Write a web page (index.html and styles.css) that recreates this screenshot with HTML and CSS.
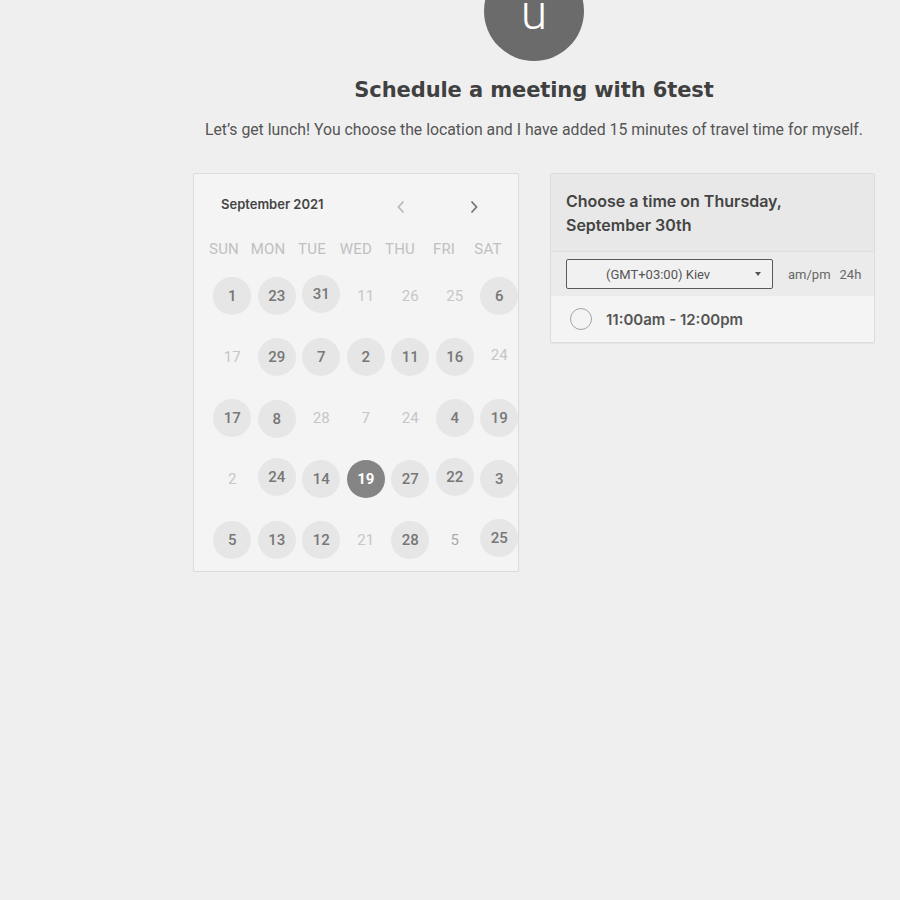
FILE: index.html
```html
<!DOCTYPE html>
<html>
<head>
<meta charset="utf-8">
<link rel="stylesheet" href="styles.css">
</head>
<body>
<main class="page">
  <div class="avatar"><span>u</span></div>
  <h1 class="title">Schedule a meeting with 6test</h1>
  <p class="subtitle">Let’s get lunch! You choose the location and I have added 15 minutes of travel time for myself.</p>
  <div class="cards">
    <section class="calendar">
      <div class="cal-head">
        <span class="month">September 2021</span>
        <span class="nav prev"><svg width="10" height="14" viewBox="0 0 10 14"><path d="M7.5 1.5 L2.5 7 L7.5 12.5" fill="none" stroke="currentColor" stroke-width="1.8"/></svg></span>
        <span class="nav next"><svg width="10" height="14" viewBox="0 0 10 14"><path d="M2.5 1.5 L7.5 7 L2.5 12.5" fill="none" stroke="currentColor" stroke-width="1.8"/></svg></span>
      </div>
      <div class="weekdays">
        <span>SUN</span><span>MON</span><span>TUE</span><span>WED</span><span>THU</span><span>FRI</span><span>SAT</span>
      </div>
      <div class="dates">
        <div class="cell"><span class="day on">1</span></div>
        <div class="cell"><span class="day on">23</span></div>
        <div class="cell"><span class="day on up">31</span></div>
        <div class="cell"><span class="day">11</span></div>
        <div class="cell"><span class="day">26</span></div>
        <div class="cell"><span class="day">25</span></div>
        <div class="cell"><span class="day on">6</span></div>

        <div class="cell"><span class="day">17</span></div>
        <div class="cell"><span class="day on">29</span></div>
        <div class="cell"><span class="day on">7</span></div>
        <div class="cell"><span class="day on">2</span></div>
        <div class="cell"><span class="day on">11</span></div>
        <div class="cell"><span class="day on">16</span></div>
        <div class="cell"><span class="day up">24</span></div>

        <div class="cell"><span class="day on">17</span></div>
        <div class="cell"><span class="day on down">8</span></div>
        <div class="cell"><span class="day">28</span></div>
        <div class="cell"><span class="day">7</span></div>
        <div class="cell"><span class="day">24</span></div>
        <div class="cell"><span class="day on">4</span></div>
        <div class="cell"><span class="day on">19</span></div>

        <div class="cell"><span class="day">2</span></div>
        <div class="cell"><span class="day on up">24</span></div>
        <div class="cell"><span class="day on">14</span></div>
        <div class="cell"><span class="day sel">19</span></div>
        <div class="cell"><span class="day on">27</span></div>
        <div class="cell"><span class="day on up">22</span></div>
        <div class="cell"><span class="day on">3</span></div>

        <div class="cell"><span class="day on">5</span></div>
        <div class="cell"><span class="day on">13</span></div>
        <div class="cell"><span class="day on">12</span></div>
        <div class="cell"><span class="day">21</span></div>
        <div class="cell"><span class="day on">28</span></div>
        <div class="cell"><span class="day mid">5</span></div>
        <div class="cell"><span class="day on up">25</span></div>
      </div>
    </section>
    <section class="times">
      <div class="times-head">Choose a time on Thursday,<br>September 30th</div>
      <div class="tz-row">
        <div class="tz-select"><span>(GMT+03:00) Kiev</span><span class="caret"></span></div>
        <div class="fmt"><span>am/pm</span><span>24h</span></div>
      </div>
      <div class="slot">
        <span class="radio"></span>
        <span class="slot-text">11:00am - 12:00pm</span>
      </div>
    </section>
  </div>
</main>
</body>
</html>
```
FILE: styles.css
```css
html, body {
  margin: 0;
  padding: 0;
  background: #efefef;
}
body {
  font-family: Roboto, "Liberation Sans", sans-serif;
  color: #555;
  overflow: hidden;
}
.page {
  margin-left: 168px;
  width: 732px;
  display: flex;
  flex-direction: column;
  align-items: center;
}
.avatar {
  width: 100px;
  height: 100px;
  border-radius: 50%;
  background: #6b6b6b;
  margin-top: -39px;
  display: flex;
  justify-content: center;
}
.avatar span {
  color: #fff;
  font-family: Roboto, sans-serif;
  font-weight: 300;
  font-size: 48px;
  line-height: 1;
  margin-top: 28px;
}
.title {
  font-family: "DejaVu Sans", Inter, sans-serif;
  font-weight: 700;
  font-size: 21px;
  line-height: 28px;
  color: #404040;
  margin: 15px 0 0;
  letter-spacing: -0.1px;
}
.subtitle {
  font-size: 15.8px;
  line-height: 20px;
  color: #555;
  margin: 16px 0 0;
}
.cards {
  display: flex;
  gap: 31px;
  margin-top: 33px;
  align-items: flex-start;
}
.calendar {
  width: 324px;
  height: 397px;
  background: #f4f4f4;
  border: 1px solid #dcdcdc;
  border-radius: 2px;
  overflow: hidden;
  box-shadow: 0 1px 1px rgba(0,0,0,0.04);
}
.cal-head {
  display: flex;
  align-items: center;
  height: 24px;
  margin-top: 18px;
  padding-left: 27px;
}
.month {
  font-family: Inter, "Liberation Sans", sans-serif;
  font-weight: 600;
  font-size: 13px;
  color: #444;
  width: 175px;
}
.nav {
  display: flex;
  margin-top: 6px;
}
.prev {
  color: #bbb;
}
.next {
  color: #777;
  margin-left: 63px;
}
.weekdays {
  display: grid;
  grid-template-columns: repeat(7, 44px);
  padding-left: 8px;
  margin-top: 23px;
  height: 20px;
  align-items: center;
}
.weekdays span {
  text-align: center;
  font-size: 15px;
  color: #c0c0c0;
  letter-spacing: 0.2px;
}
.dates {
  display: grid;
  grid-template-columns: repeat(7, 44.5px);
  grid-auto-rows: 61px;
  padding-left: 16px;
  margin-top: 6px;
}
.cell {
  display: flex;
  align-items: center;
  justify-content: center;
}
.day {
  width: 38px;
  height: 38px;
  border-radius: 50%;
  display: flex;
  align-items: center;
  justify-content: center;
  font-size: 15px;
  color: #c6c6c6;
}
.day.on {
  background: #e6e6e6;
  color: #777;
  font-weight: 500;
}
.day.mid {
  color: #aaa;
}
.day.sel {
  background: #848484;
  color: #fff;
  font-weight: 700;
}
.day.up {
  margin-top: -4px;
}
.day.down {
  margin-top: 3px;
}
.times {
  width: 323px;
  background: #f4f4f4;
  border: 1px solid #dcdcdc;
  border-radius: 2px;
  box-shadow: 0 1px 1px rgba(0,0,0,0.05);
}
.times-head {
  background: #e8e8e8;
  padding: 15px 15px 14px;
  font-family: Inter, "Liberation Sans", sans-serif;
  font-weight: 600;
  font-size: 16px;
  line-height: 24px;
  color: #444;
  border-bottom: 1px solid #dddddd;
}
.tz-row {
  background: #ebebeb;
  display: flex;
  align-items: center;
  height: 44px;
  padding-left: 15px;
  gap: 15px;
}
.tz-select {
  width: 205px;
  height: 28px;
  border: 1px solid #5a5a5a;
  border-radius: 2px;
  background: #f1f1f1;
  display: flex;
  align-items: center;
  box-sizing: content-box;
  font-size: 13px;
  color: #555;
}
.tz-select span:first-child {
  margin-left: 39px;
  flex: 1;
}
.caret {
  width: 0;
  height: 0;
  border-left: 3.5px solid transparent;
  border-right: 3.5px solid transparent;
  border-top: 4px solid #555;
  margin-right: 11px;
}
.fmt {
  display: flex;
  gap: 9px;
  font-size: 13px;
  color: #666;
}
.slot {
  display: flex;
  align-items: center;
  height: 46px;
  padding-left: 19px;
  gap: 14px;
}
.radio {
  width: 20px;
  height: 20px;
  border: 1.5px solid #a5a5a5;
  border-radius: 50%;
}
.slot-text {
  font-family: Inter, "Liberation Sans", sans-serif;
  font-weight: 600;
  font-size: 15px;
  color: #555;
}
```
